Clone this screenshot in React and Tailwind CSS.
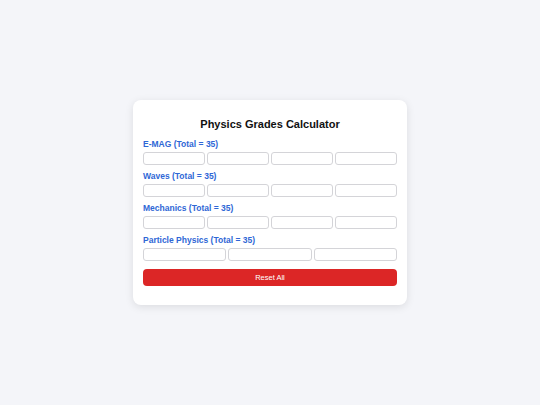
import React from "react";

const sections = [
  { name: "E-MAG (Total = 35)", n: 4 },
  { name: "Waves (Total = 35)", n: 4 },
  { name: "Mechanics (Total = 35)", n: 4 },
  { name: "Particle Physics (Total = 35)", n: 3 },
];

export default function App() {
  return (
    <div
      className="w-[540px] h-[405px] bg-[#f4f5f9] flex items-center justify-center"
      style={{ fontFamily: '"Liberation Sans", Arial, sans-serif' }}
    >
      <div className="w-[274px] bg-white rounded-lg shadow-[0_2px_8px_rgba(0,0,0,0.1)] px-[10px] pt-[16px] pb-[19px] flex flex-col">
        <h1 className="text-[11px] leading-[16px] font-bold text-[#111] text-center mb-[6px]">
          Physics Grades Calculator
        </h1>
        {sections.map((s) => (
          <div key={s.name} className="flex flex-col mb-[5px]">
            <div className="text-[8.5px] leading-[12px] font-bold text-[#2f67d6] mb-[2px]">
              {s.name}
            </div>
            <div className="flex gap-[2px]">
              {Array.from({ length: s.n }).map((_, i) => (
                <input
                  key={i}
                  className="flex-1 min-w-0 h-[13px] border border-[#d4d4d8] rounded-[3px] bg-white"
                />
              ))}
            </div>
          </div>
        ))}
        <button className="mt-[3px] h-[17px] w-full bg-[#dc2626] text-white text-[7.5px] rounded-[4px]">
          Reset All
        </button>
      </div>
    </div>
  );
}
